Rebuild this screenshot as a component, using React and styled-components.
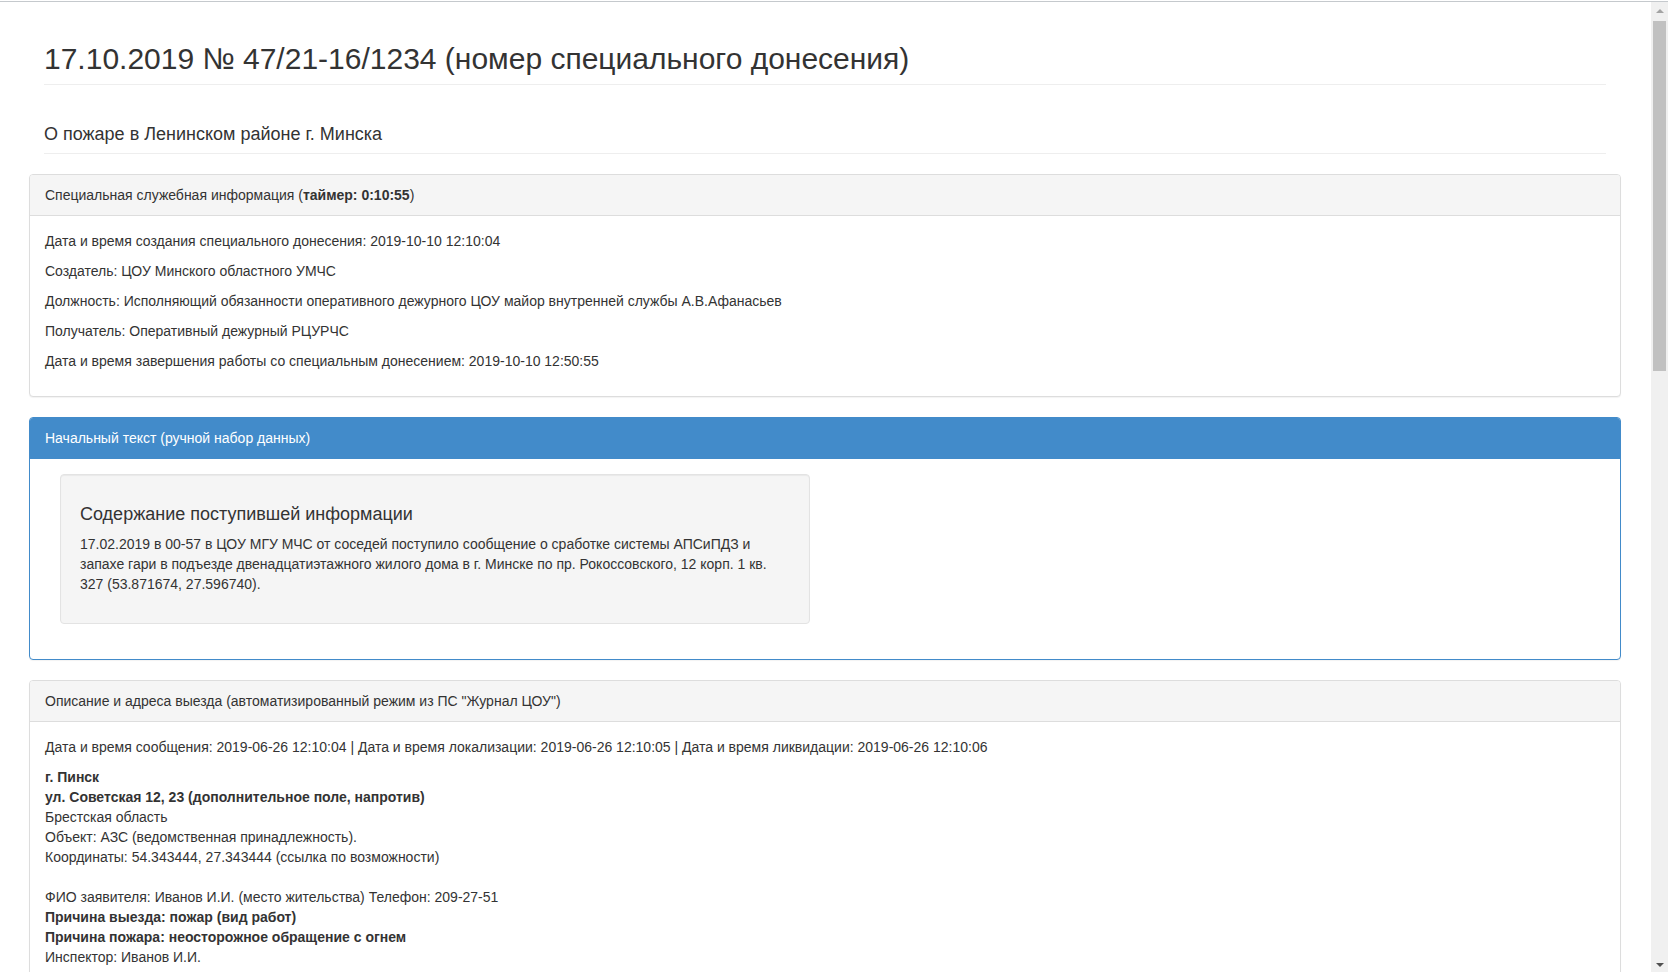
import React from "react";
import styled, { createGlobalStyle } from "styled-components";

const GlobalStyle = createGlobalStyle`
  html, body { margin: 0; padding: 0; background: #fff; }
  body {
    font-family: "Liberation Sans", Arial, Helvetica, sans-serif;
    font-size: 14px;
    line-height: 20px;
    color: #333;
  }
  * { box-sizing: border-box; }
`;

const Frame = styled.div`
  display: flex;
  flex-direction: row;
  height: 972px;
  overflow: hidden;
  border-top: 1px solid #c5c9cd;
  margin-top: 1px;
`;

const Main = styled.main`
  flex: 1;
  min-width: 0;
  overflow: hidden;
  padding: 0 30px 0 29px;
`;

const PageHeader = styled.div`
  margin: ${(p) => p.$top}px 15px 0;
  padding-bottom: ${(p) => p.$pad}px;
  border-bottom: 1px solid #eee;
`;

const Title = styled.h1`
  margin: 0;
  font-size: 30px;
  font-weight: 400;
  line-height: 33px;
  color: #333;
`;

const Subtitle = styled.h3`
  margin: 0;
  font-size: 18px;
  font-weight: 400;
  line-height: 20px;
  color: #333;
`;

const Panel = styled.section`
  margin-top: ${(p) => p.$top || 0}px;
  margin-bottom: 20px;
  border: 1px solid ${(p) => (p.$primary ? "#428bca" : "#ddd")};
  border-radius: 4px;
  background: #fff;
  box-shadow: 0 1px 1px rgba(0, 0, 0, 0.05);
`;

const PanelHeading = styled.div`
  padding: 10px 15px;
  line-height: 20px;
  border-bottom: 1px solid ${(p) => (p.$primary ? "#428bca" : "#ddd")};
  border-top-left-radius: 3px;
  border-top-right-radius: 3px;
  background: ${(p) => (p.$primary ? "#428bca" : "#f5f5f5")};
  color: ${(p) => (p.$primary ? "#fff" : "#333")};
`;

const PanelBody = styled.div`
  padding: 15px;
`;

const Para = styled.p`
  margin: 0 0 10px;
`;

const HalfColumn = styled.div`
  width: 50%;
  padding: 0 15px;
`;

const Well = styled.div`
  min-height: 20px;
  padding: 19px;
  margin-bottom: 20px;
  background: #f5f5f5;
  border: 1px solid #e3e3e3;
  border-radius: 4px;
  box-shadow: inset 0 1px 1px rgba(0, 0, 0, 0.05);
`;

const WellTitle = styled.h4`
  margin: 10px 0 10px;
  font-size: 18px;
  font-weight: 400;
  line-height: 20px;
  color: #333;
`;

const AddressBlock = styled.div`
  line-height: 20px;
`;

const Line = styled.div`
  font-weight: ${(p) => (p.$bold ? 700 : 400)};
  min-height: 20px;
`;

const Scrollbar = styled.div`
  width: 17px;
  flex: none;
  display: flex;
  flex-direction: column;
  background: #f0f0f0;
`;

const ArrowButton = styled.div`
  height: 17px;
  display: flex;
  align-items: center;
  justify-content: center;
  flex: none;
`;

const Triangle = styled.span`
  width: 0;
  height: 0;
  border-left: 4px solid transparent;
  border-right: 4px solid transparent;
  ${(p) =>
    p.$down
      ? `border-top: 4px solid #505050;`
      : `border-bottom: 4px solid #a3a3a3;`}
`;

const Thumb = styled.div`
  height: 350px;
  margin: 2px 2px 0;
  background: #c1c1c1;
  flex: none;
`;

const Track = styled.div`
  flex: 1;
`;

const infoRows = [
  "Дата и время создания специального донесения: 2019-10-10 12:10:04",
  "Создатель: ЦОУ Минского областного УМЧС",
  "Должность: Исполняющий обязанности оперативного дежурного ЦОУ майор внутренней службы А.В.Афанасьев",
  "Получатель: Оперативный дежурный РЦУРЧС",
  "Дата и время завершения работы со специальным донесением: 2019-10-10 12:50:55",
];

const addressLines = [
  { text: "г. Пинск", bold: true },
  { text: "ул. Советская 12, 23 (дополнительное поле, напротив)", bold: true },
  { text: "Брестская область" },
  { text: "Объект: АЗС (ведомственная принадлежность)." },
  { text: "Координаты: 54.343444, 27.343444 (ссылка по возможности)" },
  { text: "" },
  { text: "ФИО заявителя: Иванов И.И. (место жительства) Телефон: 209-27-51" },
  { text: "Причина выезда: пожар (вид работ)", bold: true },
  { text: "Причина пожара: неосторожное обращение с огнем", bold: true },
  { text: "Инспектор: Иванов И.И." },
];

export default function App() {
  return (
    <>
      <GlobalStyle />
      <Frame>
        <Main>
          <PageHeader $top={40} $pad={9}>
            <Title>17.10.2019 № 47/21-16/1234 (номер специального донесения)</Title>
          </PageHeader>
          <PageHeader $top={39} $pad={9}>
            <Subtitle>О пожаре в Ленинском районе г. Минска</Subtitle>
          </PageHeader>

          <Panel $top={20}>
            <PanelHeading>
              Специальная служебная информация (<b>таймер: 0:10:55</b>)
            </PanelHeading>
            <PanelBody>
              {infoRows.map((r) => (
                <Para key={r}>{r}</Para>
              ))}
            </PanelBody>
          </Panel>

          <Panel $primary>
            <PanelHeading $primary>Начальный текст (ручной набор данных)</PanelHeading>
            <PanelBody>
              <HalfColumn>
                <Well>
                  <WellTitle>Содержание поступившей информации</WellTitle>
                  <Para>
                    17.02.2019 в 00-57 в ЦОУ МГУ МЧС от соседей поступило сообщение о сработке
                    системы АПСиПДЗ и запахе гари в подъезде двенадцатиэтажного жилого дома в г.
                    Минске по пр. Рокоссовского, 12 корп. 1 кв. 327 (53.871674, 27.596740).
                  </Para>
                </Well>
              </HalfColumn>
            </PanelBody>
          </Panel>

          <Panel>
            <PanelHeading>
              Описание и адреса выезда (автоматизированный режим из ПС "Журнал ЦОУ")
            </PanelHeading>
            <PanelBody>
              <Para>
                Дата и время сообщения: 2019-06-26 12:10:04 | Дата и время локализации:
                2019-06-26 12:10:05 | Дата и время ликвидации: 2019-06-26 12:10:06
              </Para>
              <AddressBlock>
                {addressLines.map((l, i) => (
                  <Line key={i} $bold={l.bold}>
                    {l.text}
                  </Line>
                ))}
              </AddressBlock>
            </PanelBody>
          </Panel>
        </Main>
        <Scrollbar>
          <ArrowButton>
            <Triangle />
          </ArrowButton>
          <Thumb />
          <Track />
          <ArrowButton>
            <Triangle $down />
          </ArrowButton>
        </Scrollbar>
      </Frame>
    </>
  );
}
